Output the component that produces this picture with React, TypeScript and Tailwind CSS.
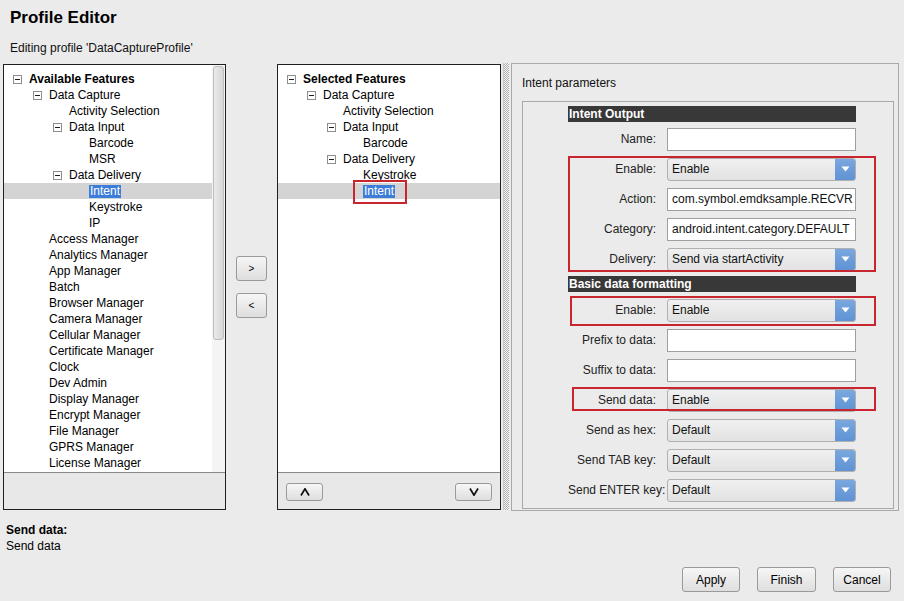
import React from 'react';

type TreeNode = { label: string; level: number; expandable?: boolean; selected?: boolean; bold?: boolean };

const availableFeatures: TreeNode[] = [
    { label: 'Available Features', level: 0, expandable: true, bold: true },
    { label: 'Data Capture', level: 1, expandable: true },
    { label: 'Activity Selection', level: 2 },
    { label: 'Data Input', level: 2, expandable: true },
    { label: 'Barcode', level: 3 },
    { label: 'MSR', level: 3 },
    { label: 'Data Delivery', level: 2, expandable: true },
    { label: 'Intent', level: 3, selected: true },
    { label: 'Keystroke', level: 3 },
    { label: 'IP', level: 3 },
    { label: 'Access Manager', level: 1 },
    { label: 'Analytics Manager', level: 1 },
    { label: 'App Manager', level: 1 },
    { label: 'Batch', level: 1 },
    { label: 'Browser Manager', level: 1 },
    { label: 'Camera Manager', level: 1 },
    { label: 'Cellular Manager', level: 1 },
    { label: 'Certificate Manager', level: 1 },
    { label: 'Clock', level: 1 },
    { label: 'Dev Admin', level: 1 },
    { label: 'Display Manager', level: 1 },
    { label: 'Encrypt Manager', level: 1 },
    { label: 'File Manager', level: 1 },
    { label: 'GPRS Manager', level: 1 },
    { label: 'License Manager', level: 1 },
];

const selectedFeatures: TreeNode[] = [
    { label: 'Selected Features', level: 0, expandable: true, bold: true },
    { label: 'Data Capture', level: 1, expandable: true },
    { label: 'Activity Selection', level: 2 },
    { label: 'Data Input', level: 2, expandable: true },
    { label: 'Barcode', level: 3 },
    { label: 'Data Delivery', level: 2, expandable: true },
    { label: 'Keystroke', level: 3 },
    { label: 'Intent', level: 3, selected: true },
];

// indent per level: box sits at the indent, text 16px further
const boxIndent = ['pl-[9px]', 'pl-[29px]', 'pl-[49px]', 'pl-[69px]'];
const leafIndent = ['pl-[25px]', 'pl-[45px]', 'pl-[65px]', 'pl-[85px]'];

const MinusBox = () => (
    <span className="relative mr-[7px] flex h-[9px] w-[9px] shrink-0 items-center justify-center border border-[#8e8e8e] bg-white">
        <span className="h-px w-[5px] bg-[#1e1e1e]" />
    </span>
);

const Tree: React.FC<{ nodes: TreeNode[] }> = ({ nodes }) => (
    <div className="pt-[6px]">
        {nodes.map((n, i) => (
            <div
                key={i}
                className={`flex h-[16px] items-center whitespace-nowrap ${n.expandable ? boxIndent[n.level] : leafIndent[n.level]} ${n.selected ? 'bg-[#d4d4d4]' : ''}`}
            >
                {n.expandable && <MinusBox />}
                <span
                    className={`${n.bold ? 'font-bold' : ''} ${n.selected ? 'bg-[#3b7dd8] px-[1px] text-white leading-[13px]' : ''}`}
                >
                    {n.label}
                </span>
            </div>
        ))}
    </div>
);

const SmallButton: React.FC<{ children: React.ReactNode; className?: string }> = ({ children, className = '' }) => (
    <div
        className={`flex items-center justify-center rounded-[3px] border border-[#9a9a9a] bg-gradient-to-b from-[#f6f6f6] to-[#dedede] ${className}`}
    >
        {children}
    </div>
);

const Caret: React.FC<{ up?: boolean }> = ({ up }) => (
    <svg width="10" height="8" viewBox="0 0 10 8">
        <polyline
            points={up ? '1,7.5 5,0.8 9,7.5' : '1,0.5 5,7.2 9,0.5'}
            fill="none"
            stroke="#111"
            strokeWidth="1.7"
        />
    </svg>
);

const TextField: React.FC<{ value?: string }> = ({ value = '' }) => (
    <div className="flex h-[23px] w-[189px] items-center border border-[#9f9f9f] bg-white pl-[4px] text-[#111]">
        {value}
    </div>
);

const SelectField: React.FC<{ value: string }> = ({ value }) => (
    <div className="flex h-[23px] w-[189px] overflow-hidden rounded-[3px] border border-[#b0b0b0] bg-gradient-to-b from-[#f0f0f0] to-[#e2e2e2]">
        <div className="flex flex-1 items-center pl-[4px] text-[#111]">{value}</div>
        <div className="flex w-[20px] items-center justify-center bg-gradient-to-b from-[#7aa7de] to-[#5f93d4]">
            <svg width="9" height="6" viewBox="0 0 9 6">
                <polygon points="0.5,0.5 8.5,0.5 4.5,5.5" fill="#fff" />
            </svg>
        </div>
    </div>
);

const FormRow: React.FC<{ label: string; children: React.ReactNode }> = ({ label, children }) => (
    <div className="flex h-[30px] items-center">
        <div className="w-[89px] whitespace-nowrap pr-[1px] text-right text-[#222]">{label}</div>
        <div className="ml-[10px]">{children}</div>
    </div>
);

const SectionBar: React.FC<{ title: string }> = ({ title }) => (
    <div className="h-[16px] w-[288px] bg-[#383838] pl-[1px] text-[12px] font-bold leading-[16px] text-white">{title}</div>
);

export default function App() {
    return (
        <div className="h-[601px] w-[904px] overflow-hidden bg-[#ebebeb] font-['Liberation_Sans',Arial,sans-serif] text-[12px] text-black">
            {/* header */}
            <div className="h-[36px] pl-[10px] text-[17px] font-bold leading-[36px]">Profile Editor</div>
            <div className="h-[24px] pl-[10px] leading-[24px] text-[#111]">Editing profile 'DataCaptureProfile'</div>

            {/* main row */}
            <div className="mt-[3px] flex h-[448px] pl-[3px]">
                {/* available features */}
                <div className="mt-[1px] flex h-[446px] w-[223px] flex-col border border-[#1f1f1f]">
                    <div className="flex h-[407px] overflow-hidden bg-white">
                        <div className="flex-1 overflow-hidden">
                            <Tree nodes={availableFeatures} />
                        </div>
                        <div className="w-[13px] bg-[#f4f4f4] px-[1px] pt-[1px]">
                            <div className="h-[274px] rounded-[3px] border border-[#bdbdbd] bg-gradient-to-r from-[#eaeaea] to-[#d6d6d6]" />
                        </div>
                    </div>
                    <div className="flex-1 border-t border-[#8a8a8a] bg-[#e8e8e8]" />
                </div>

                {/* move buttons */}
                <div className="flex w-[51px] flex-col gap-[12px] pl-[10px] pt-[193px]">
                    <SmallButton className="h-[25px] w-[31px] text-[10px]">&gt;</SmallButton>
                    <SmallButton className="h-[25px] w-[31px] text-[10px]">&lt;</SmallButton>
                </div>

                {/* selected features */}
                <div className="relative mt-[1px] flex h-[446px] w-[224px] flex-col border border-[#1f1f1f]">
                    <div className="h-[407px] overflow-hidden bg-white">
                        <Tree nodes={selectedFeatures} />
                    </div>
                    <div className="flex flex-1 items-start justify-between border-t border-[#8a8a8a] bg-[#e8e8e8] px-[8px] pt-[10px]">
                        <SmallButton className="h-[18px] w-[37px]">
                            <Caret up />
                        </SmallButton>
                        <SmallButton className="h-[18px] w-[37px]">
                            <Caret />
                        </SmallButton>
                    </div>
                    <div className="absolute left-[75px] top-[115px] h-[24px] w-[54px] border-2 border-[#c8252f]" />
                </div>

                {/* splitter */}
                <div className="flex w-[10px] justify-center pb-[1px]">
                    <div className="w-[6px] border-l border-[#c8c8c8] bg-[repeating-conic-gradient(#b0b0b0_0_25%,#f3f3f3_0_50%)] bg-[length:2px_2px]" />
                </div>

                {/* intent parameters */}
                <div className="h-[448px] w-[388px] overflow-hidden border border-[#a9a9a9] pl-[10px]">
                    <div className="pt-[11px] leading-[16px] text-[#111]">Intent parameters</div>
                    <div className="mt-[10px] h-[408px] w-[372px] border border-[#a9a9a9] pl-[45px] pt-[4px]">
                        <div className="relative w-[310px]">
                            <SectionBar title="Intent Output" />
                            <div className="mt-[2px]">
                                <FormRow label="Name:">
                                    <TextField />
                                </FormRow>
                                <FormRow label="Enable:">
                                    <SelectField value="Enable" />
                                </FormRow>
                                <FormRow label="Action:">
                                    <TextField value="com.symbol.emdksample.RECVR" />
                                </FormRow>
                                <FormRow label="Category:">
                                    <TextField value="android.intent.category.DEFAULT" />
                                </FormRow>
                                <FormRow label="Delivery:">
                                    <SelectField value="Send via startActivity" />
                                </FormRow>
                            </div>
                            <div className="mt-[2px]">
                                <SectionBar title="Basic data formatting" />
                            </div>
                            <div className="mt-[3px]">
                                <FormRow label="Enable:">
                                    <SelectField value="Enable" />
                                </FormRow>
                                <FormRow label="Prefix to data:">
                                    <TextField />
                                </FormRow>
                                <FormRow label="Suffix to data:">
                                    <TextField />
                                </FormRow>
                                <FormRow label="Send data:">
                                    <SelectField value="Enable" />
                                </FormRow>
                                <FormRow label="Send as hex:">
                                    <SelectField value="Default" />
                                </FormRow>
                                <FormRow label="Send TAB key:">
                                    <SelectField value="Default" />
                                </FormRow>
                                <FormRow label="Send ENTER key:">
                                    <SelectField value="Default" />
                                </FormRow>
                            </div>

                            {/* highlight annotations */}
                            <div className="absolute left-0 top-[50px] h-[116px] w-[308px] border-2 border-[#c8252f]" />
                            <div className="absolute left-[2px] top-[190px] h-[30px] w-[306px] border-2 border-[#c8252f]" />
                            <div className="absolute left-[4px] top-[281px] h-[24px] w-[304px] border-2 border-[#c8252f]" />
                        </div>
                    </div>
                </div>
            </div>

            {/* description */}
            <div className="mt-[11px] pl-[6px] leading-[16px]">
                <div className="font-bold">Send data:</div>
                <div>Send data</div>
            </div>

            {/* footer buttons */}
            <div className="mt-[13px] flex justify-end gap-[17px] pr-[13px]">
                <SmallButton className="h-[25px] w-[58px]">Apply</SmallButton>
                <SmallButton className="h-[25px] w-[59px]">Finish</SmallButton>
                <SmallButton className="h-[25px] w-[58px]">Cancel</SmallButton>
            </div>
        </div>
    );
}
